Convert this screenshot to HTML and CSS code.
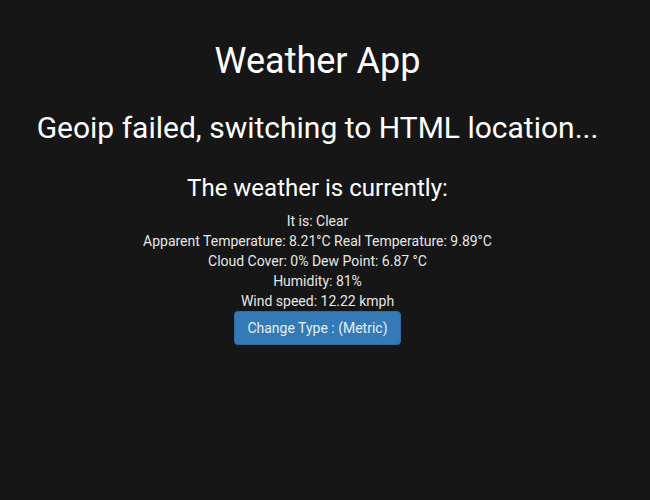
FILE: index.html
```html
<!DOCTYPE html>
<html>
<head>
<meta charset="utf-8">
<link rel="stylesheet" href="styles.css">
</head>
<body>
<div class="app">
  <h1 class="title">Weather App</h1>
  <h2 class="status">Geoip failed, switching to HTML location...</h2>
  <h3 class="heading">The weather is currently:</h3>
  <div class="details">
    <p class="line">It is: Clear</p>
    <p class="line">Apparent Temperature: 8.21°C Real Temperature: 9.89°C</p>
    <p class="line">Cloud Cover: 0% Dew Point: 6.87 °C</p>
    <p class="line">Humidity: 81%</p>
    <p class="line">Wind speed: 12.22 kmph</p>
  </div>
  <button class="btn">Change Type : (Metric)</button>
</div>
</body>
</html>
```
FILE: styles.css
```css
html, body {
  margin: 0;
  padding: 0;
  background: #161616;
  height: 100%;
}
body {
  font-family: Roboto, "Liberation Sans", sans-serif;
  color: #f2f2f2;
}
.app {
  width: 635px;
  display: flex;
  flex-direction: column;
  align-items: center;
  text-align: center;
  padding-top: 41px;
}
.title {
  margin: 0;
  font-size: 36px;
  line-height: 40px;
  font-weight: 400;
  color: #ffffff;
}
.status {
  margin: 30px 0 0;
  font-size: 30px;
  line-height: 34px;
  font-weight: 400;
  color: #ffffff;
}
.heading {
  margin: 29px 0 0;
  font-size: 24px;
  line-height: 28px;
  font-weight: 400;
  color: #ffffff;
}
.details {
  margin-top: 9px;
}
.line {
  margin: 0;
  font-size: 14px;
  line-height: 20px;
  color: #e6e6e6;
}
.btn {
  margin: 0;
  font-family: Roboto, "Liberation Sans", sans-serif;
  font-size: 14px;
  line-height: 20px;
  padding: 6px 12px;
  color: #e8eef5;
  background: #337ab7;
  border: 1px solid #2e6da4;
  border-radius: 4px;
  white-space: nowrap;
}
```
